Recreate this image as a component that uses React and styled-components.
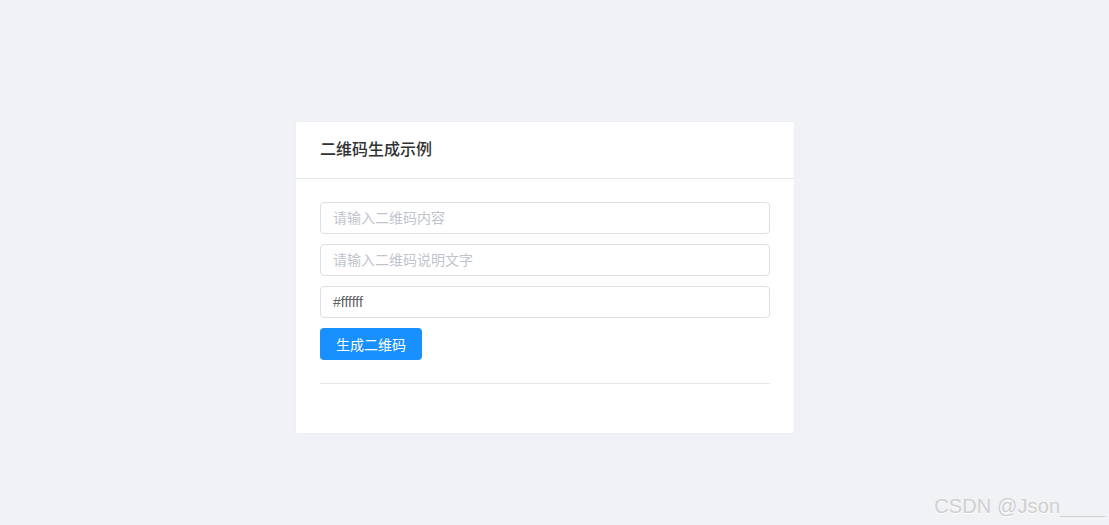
import React from 'react';
import styled, { createGlobalStyle } from 'styled-components';

const Global = createGlobalStyle`
  html, body {
    margin: 0;
    padding: 0;
    background: #f0f2f5;
    font-family: "Liberation Sans", "Noto Sans CJK SC", sans-serif;
  }
`;

const Page = styled.div`
  position: relative;
  min-height: 525px;
  display: flex;
  justify-content: center;
  align-items: flex-start;
  padding: 121px 19px 0 0;
  box-sizing: border-box;
`;

const Card = styled.div`
  width: 500px;
  background: #fff;
  border: 1px solid #ebeef5;
  border-radius: 2px;
  box-sizing: border-box;
`;

const Header = styled.div`
  padding: 16px 24px;
  border-bottom: 1px solid #e4e7ed;
  font-size: 16px;
  line-height: 24px;
  color: #303133;
  font-weight: 500;
`;

const Body = styled.div`
  padding: 23px 24px 24px;
  display: flex;
  flex-direction: column;
  gap: 10px;
`;

const Input = styled.input`
  height: 32px;
  width: 100%;
  box-sizing: border-box;
  border: 1px solid #dcdfe6;
  border-radius: 4px;
  padding: 0 12px;
  font-family: inherit;
  font-size: 14px;
  color: #606266;
  outline: none;
  &::placeholder {
    color: #c0c4cc;
  }
`;

const Button = styled.button`
  align-self: flex-start;
  height: 32px;
  padding: 0 16px;
  border: none;
  border-radius: 4px;
  background: #1890ff;
  color: #fff;
  font-family: inherit;
  font-size: 14px;
  cursor: pointer;
`;

const Divider = styled.div`
  height: 1px;
  background: #e8e8e8;
  margin: 13px 0 25px;
`;

const Watermark = styled.div`
  position: absolute;
  right: 4px;
  bottom: 7px;
  font-size: 20px;
  color: #cfcfcf;
  text-shadow: 0 1px 1px #fff;
  letter-spacing: 0.1px;
`;

export default function App() {
  return (
    <>
      <Global />
      <Page>
        <Card>
          <Header>二维码生成示例</Header>
          <Body>
            <Input placeholder="请输入二维码内容" />
            <Input placeholder="请输入二维码说明文字" />
            <Input defaultValue="#ffffff" />
            <Button>生成二维码</Button>
            <Divider />
          </Body>
        </Card>
        <Watermark>CSDN @Json____</Watermark>
      </Page>
    </>
  );
}
